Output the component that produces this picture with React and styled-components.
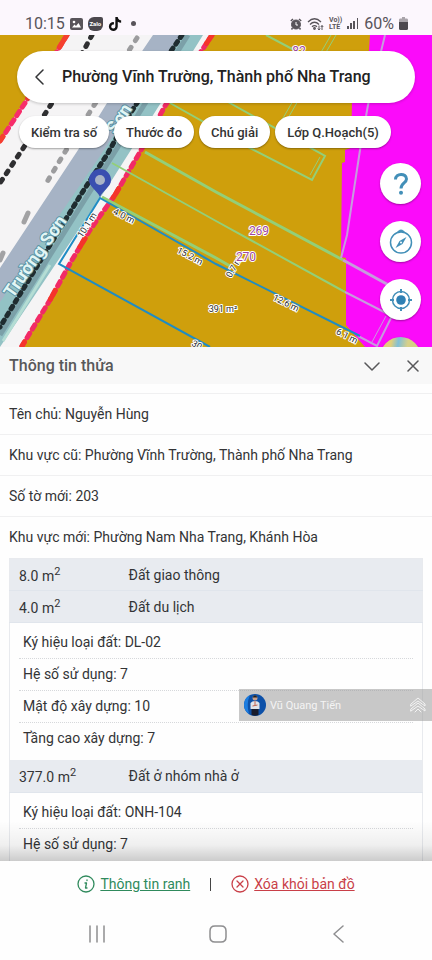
import React, { useState } from 'react';
import styled, { createGlobalStyle } from 'styled-components';
import { FaTiktok } from 'react-icons/fa';

const GlobalStyle = createGlobalStyle`
  * {
    box-sizing: border-box;
  }

  body {
    margin: 0;
    background: #fefefe;
    color: #333436;
    font-family: Roboto, 'Noto Sans', sans-serif;
  }

  button {
    border: none;
    padding: 0;
    font-family: inherit;
    color: inherit;
    cursor: pointer;
  }
`;

const Screen = styled.div`
  display: flex;
  flex-direction: column;
  height: 100vh;
  overflow: hidden;
`;

const StatusBar = styled.header`
  display: flex;
  justify-content: space-between;
  align-items: center;
  flex: none;
  height: 35px;
  padding: 12px 24px 0 25px;
  background: #fcf7fd;
  color: #58545a;
`;

const StatusGroup = styled.div`
  display: flex;
  align-items: center;
  gap: 5px;
`;

const StatusText = styled.span`
  font-size: 16px;
  line-height: 20px;
`;

const ZaloBadge = styled.span`
  width: 15px;
  height: 14px;
  border-radius: 6px 2px 6px 6px;
  background: #4c484e;
  color: #fff;
  font-size: 6px;
  font-weight: 700;
  line-height: 14px;
  text-align: center;
`;

const Dot = styled.span`
  width: 5px;
  height: 5px;
  margin-left: 4px;
  border-radius: 50%;
  background: #58545a;
`;

const VoLte = styled.span`
  font-size: 7px;
  font-weight: 700;
  line-height: 7px;
`;

const MapArea = styled.section`
  position: relative;
  flex: none;
  height: 312px;
  padding: 16px 17px 0;
  overflow: hidden;
  background: #cf9f0c;
`;

const MapCanvas = styled.svg`
  position: absolute;
  top: 0;
  left: 0;
  width: 100%;
  height: 100%;

  text {
    font-family: Roboto, sans-serif;
    text-anchor: middle;
    paint-order: stroke;
    stroke-linejoin: round;
  }
`;

const SearchPill = styled.div`
  position: relative;
  display: flex;
  align-items: center;
  height: 52px;
  padding-left: 8px;
  border-radius: 26px;
  background: #fff;
  box-shadow: 0 1px 3px rgba(0, 0, 0, 0.2);
`;

const BackBtn = styled.button`
  display: flex;
  align-items: center;
  justify-content: center;
  width: 30px;
  height: 40px;
  margin-right: 7px;
  background: none;
`;

const PlaceName = styled.h1`
  margin: 0;
  color: #222;
  font-size: 16px;
  font-weight: 500;
  line-height: 24px;
  white-space: nowrap;
`;

const ChipRow = styled.nav`
  position: relative;
  display: flex;
  gap: 5px;
  margin-top: 13px;
  padding-left: 2px;
`;

const Chip = styled.button`
  height: 32px;
  padding: 0 12px;
  border-radius: 16px;
  background: #fff;
  box-shadow: 0 1px 2px rgba(0, 0, 0, 0.35);
  color: #333;
  font-size: 13px;
  font-weight: 500;
  white-space: nowrap;
`;

const MapTools = styled.div`
  position: absolute;
  top: 128px;
  right: 11px;
  display: flex;
  flex-direction: column;
  gap: 17px;
`;

const ToolBtn = styled.button`
  display: flex;
  align-items: center;
  justify-content: center;
  width: 41px;
  height: 41px;
  overflow: hidden;
  border-radius: 50%;
  background: #fff;
  box-shadow: 0 1px 2px rgba(0, 0, 0, 0.35);
  color: #428fb8;
`;

const LayerBtn = styled(ToolBtn)`
  background: linear-gradient(100deg, #e2cf7a 25%, #7fbfd8 40%, #d8d088 60%, #c9cf78 100%);
`;

const Sheet = styled.main`
  position: relative;
  flex: 1;
  min-height: 0;
  overflow: hidden;

  &::after {
    content: '';
    position: absolute;
    right: 0;
    bottom: 0;
    left: 0;
    height: 40px;
    background: linear-gradient(rgba(0, 0, 0, 0), rgba(0, 0, 0, 0.06) 60%, rgba(0, 0, 0, 0.2));
    pointer-events: none;
  }
`;

const SheetHeader = styled.div`
  display: flex;
  align-items: center;
  height: 37px;
  padding: 0 9px;
  background: #f8f8f8;
  color: #58585a;
`;

const SheetTitle = styled.h2`
  flex: 1;
  margin: 0;
  font-size: 16px;
  font-weight: 500;
  line-height: 24px;
`;

const IconBtn = styled.button`
  display: flex;
  align-items: center;
  justify-content: center;
  width: 20px;
  height: 30px;
  margin-left: 21px;
  background: none;
`;

const InfoList = styled.div`
  padding: 9px 0 1px;
`;

const InfoRow = styled.p`
  margin: 0;
  padding: 0 9px;
  border-top: 1px solid #f0f0f1;
  font-size: 14px;
  line-height: 40px;
`;

const LandTable = styled.table`
  width: calc(100% - 18px);
  margin: 0 9px;
  border: 1px solid #e8eaee;
  border-collapse: collapse;
  font-size: 14px;

  td {
    padding: 0;
  }
`;

const LandRow = styled.tr`
  height: 32px;
  border-bottom: 1px solid #e0e5ec;
  background: #e8ebf0;

  th {
    width: 119px;
    padding: 0 0 0 9px;
    font-weight: 400;
    text-align: left;
  }

  sup {
    font-size: 11px;
    line-height: 1;
  }
`;

const DetailList = styled.ul`
  margin: 0;
  padding: 4px 9px 6px;
  list-style: none;
`;

const DetailItem = styled.li`
  padding: 0 4px;
  border-bottom: 1px dotted #d6d8db;
  line-height: 31px;

  &:last-child {
    border-bottom: none;
  }
`;

const AgentTag = styled.aside`
  position: absolute;
  top: 342px;
  right: 0;
  display: flex;
  align-items: center;
  gap: 4px;
  width: 193px;
  height: 32px;
  padding: 0 6px 0 5px;
  background: rgba(155, 155, 155, 0.55);
  color: #f4f4f4;
  font-size: 11px;

  span {
    flex: 1;
  }
`;

const Actions = styled.footer`
  display: flex;
  justify-content: center;
  align-items: center;
  flex: none;
  height: 46px;
  background: #fefefe;
  font-size: 14px;
`;

const ActionLink = styled.a`
  display: flex;
  align-items: center;
  gap: 5px;
  color: ${({ $color }) => $color};
`;

const Divider = styled.span`
  width: 1px;
  height: 13px;
  margin: 0 20px;
  background: #444;
`;

const NavBar = styled.nav`
  display: flex;
  justify-content: space-around;
  align-items: center;
  flex: none;
  height: 53px;
  padding: 0 33px 0 36px;
  color: #8e8e90;
`;

const NavBtn = styled.button`
  display: flex;
  align-items: center;
  justify-content: center;
  width: 40px;
  height: 40px;
  background: none;
`;

const parcelLabels = [
  { text: '10.1 m', x: 87, y: 225, rotate: -57 },
  { text: '4.0 m', x: 124, y: 216, rotate: 27 },
  { text: '15.2 m', x: 190, y: 256, rotate: 28 },
  { text: '0.7 m', x: 234, y: 267, rotate: -60 },
  { text: '12.6 m', x: 286, y: 303, rotate: 27 },
  { text: '6.1 m', x: 347, y: 336, rotate: 27 },
  { text: '391 m²', x: 223, y: 309, rotate: 0 },
  { text: '30', x: 197, y: 345, rotate: 28 },
];

const parcelNumbers = [
  { text: '269', x: 259, y: 235 },
  { text: '270', x: 246, y: 261 },
  { text: '82', x: 299, y: 55 },
];

const infoRows = [
  'Tên chủ: Nguyễn Hùng',
  'Khu vực cũ: Phường Vĩnh Trường, Thành phố Nha Trang',
  'Số tờ mới: 203',
  'Khu vực mới: Phường Nam Nha Trang, Khánh Hòa',
];

const landUses = [
  { area: '8.0', name: 'Đất giao thông' },
  {
    area: '4.0',
    name: 'Đất du lịch',
    details: ['Ký hiệu loại đất: DL-02', 'Hệ số sử dụng: 7', 'Mật độ xây dựng: 10', 'Tầng cao xây dựng: 7'],
  },
  {
    area: '377.0',
    name: 'Đất ở nhóm nhà ở',
    details: ['Ký hiệu loại đất: ONH-104', 'Hệ số sử dụng: 7'],
  },
];

const PlanningMap = () => (
  <MapCanvas viewBox="0 35 432 312" preserveAspectRatio="xMidYMid slice" aria-hidden="true">
    <rect x="0" y="35" width="432" height="312" fill="#cf9f0c" />
    <polygon points="66,35 212,35 165,106 140,150 20,347 0,347 0,140" fill="#f5f4f5" />

    {/* road */}
    <polygon points="153,35 196,35 152,103 112,168 0,345 0,268 78,150 107,103" fill="#a6b3c5" />
    <polygon points="180,35 203,35 162,101 110,183 0,347 0,302 100,156" fill="#93c2c5" />
    <path d="M188 35 L0 335" stroke="#7ba0a8" strokeWidth="5" />
    <path d="M182 35 L165 60 L128 117 L108 153 L80 196 L0 327" stroke="#1f2c30" strokeWidth="5" strokeDasharray="3 5" strokeLinecap="round" fill="none" />
    <path d="M50 265 L3 341" stroke="#b4ddd4" strokeWidth="3" />

    {/* dotted planning lines */}
    <g fill="none" strokeLinecap="round">
      <path d="M92 35 L84 50 L52 103 L22 150 L0 183" stroke="#2f2f31" strokeWidth="5" strokeDasharray="3 7" />
      <path d="M137 38 L93 107 L65 152 L47 182" stroke="#9c9c9e" strokeWidth="5" strokeDasharray="3 8" />
      <path d="M28 213 L24 222 M3 253 L0 260" stroke="#a2a2a4" strokeWidth="5" />
      <path d="M67 35 L25 103 L0 141" stroke="#f72d6a" strokeWidth="5" strokeDasharray="5 5" />
      <path d="M67 35 L25 103 L0 141" stroke="#f5402e" strokeWidth="5" strokeDasharray="14 46" />
      <path d="M212 35 L165 106 L140 152 L115 195 L90 230 L72 260 L50 300 L22 346" stroke="#f22a66" strokeWidth="5" strokeDasharray="5 5" />
      <path d="M212 35 L165 106 L140 152 L115 195 L90 230 L72 260 L50 300 L22 346" stroke="#f5342b" strokeWidth="5" strokeDasharray="10 50" />
    </g>

    <polygon
      points="370,35 369,50 352,103 351,148 345,150 345,162 342,163 341,257 346,258 346,325 352,332 365,347 432,347 432,35"
      fill="#fb0bfa"
    />

    {/* parcel borders */}
    <g fill="none" stroke="#93cf78" strokeWidth="2">
      <path d="M266 35 L296 51" />
      <path d="M331 35 L275 132 M336 35 L280 132" strokeWidth="1" />
      <path d="M170 103 L250 148 L312 180 L325 156 L228 102" />
      <path d="M310 175 L320 157" strokeWidth="1" />
      <path d="M145 152 L216 192 L343 260" strokeWidth="3" />
      <path d="M112 163 L216 221 L345 292" />
      <path d="M102 197 L216 258 L230 266" strokeWidth="3" />
    </g>
    <g fill="none" stroke="#c69bdd" strokeWidth="3">
      <path d="M385 35 L368 105 L360 150 L347 235 L341 258" strokeWidth="2" />
      <path d="M343 260 L394 288" />
      <path d="M345 292 L392 316 L377 346 L358 336" strokeWidth="2" />
      <path d="M386 316 L372 342" strokeWidth="1" />
    </g>

    <path d="M210 347 L59 264 L100 198 L216 264 L360 336" fill="none" stroke="#1f8cc4" strokeWidth="2" />

    <g fill="#e2f6f5" stroke="#5a93a5" strokeWidth="2" fontSize="18" fontWeight="700">
      <text transform="translate(40 260) rotate(-55)">Trường Sơn</text>
      <text transform="translate(124 122) rotate(-57)">Sơn</text>
    </g>

    <g fill="#2b2b2b" stroke="#fff" strokeWidth="2" fontSize="9">
      {parcelLabels.map(label => (
        <text key={label.text} dy="3" transform={`translate(${label.x} ${label.y}) rotate(${label.rotate})`}>
          {label.text}
        </text>
      ))}
    </g>
    <g fill="#a0489f" stroke="#fff" strokeWidth="2" fontSize="12">
      {parcelNumbers.map(number => (
        <text key={number.text} x={number.x} y={number.y}>
          {number.text}
        </text>
      ))}
    </g>

    {/* location pin */}
    <path d="M100 197 C97 190 89 187 89 180 A11 11 0 0 1 111 180 C111 187 103 190 100 197 Z" fill="#3a4fb0" />
    <circle cx="100" cy="180" r="5" fill="#a9b4c6" />
  </MapCanvas>
);

const ImageIcon = () => (
  <svg width="13" height="12" viewBox="0 0 13 12">
    <rect width="13" height="12" rx="2" fill="#58545a" />
    <circle cx="4" cy="4" r="1.3" fill="#fff" />
    <path d="M2 9.5 L4.500 6.5 L6 8 L8.500 5 L11 9.5 Z" fill="#fff" />
  </svg>
);

const AlarmIcon = () => (
  <svg width="12" height="12" viewBox="0 0 12 12" fill="none" stroke="#58545a">
    <circle cx="6" cy="6.5" r="4.5" fill="#58545a" />
    <path d="M0.800 3 L3 1 M11.200 3 L9 1 M2.500 10 L1.500 11.500 M9.500 10 L10.500 11.500" strokeWidth="1.5" />
    <path d="M6 4 V7 H8" stroke="#fff" />
  </svg>
);

const WifiIcon = () => (
  <svg width="17" height="14" viewBox="0 0 17 14" fill="none" stroke="#58545a" strokeWidth="1.3">
    <path d="M1 5 Q7.500 -1.500 14 5 M3 7.500 Q7.500 3 12 7.500 M5 9.800 Q7.500 7.500 10 9.800" />
    <circle cx="7.5" cy="11.5" r="0.8" />
    <path d="M12 8.500 V13 M10.800 11.500 L12 13 L13.200 11.500 M15 13 V8.500 M13.800 10 L15 8.500 L16.200 10" strokeWidth="1" />
  </svg>
);

const SignalIcon = () => (
  <svg width="12" height="11" viewBox="0 0 12 11" fill="#58545a">
    <rect x="0" y="8" width="2" height="3" />
    <rect x="3" y="5" width="2" height="6" />
    <rect x="6" y="3" width="2" height="8" />
    <rect x="10" y="0" width="1" height="11" />
  </svg>
);

const BatteryIcon = () => (
  <svg width="9" height="13" viewBox="0 0 9 13">
    <path d="M3 0 H6 V1.500 H8 Q9 1.500 9 3 V5 H0 V3 Q0 1.500 1 1.500 H3 Z" fill="#a9a4aa" />
    <path d="M0 5 H9 V11.500 Q9 13 7.500 13 H1.500 Q0 13 0 11.500 Z" fill="#4c484e" />
  </svg>
);

const Stroke = ({ size, d, width = 1.5 }) => (
  <svg
    width={size}
    height={size}
    viewBox={`0 0 ${size} ${size}`}
    fill="none"
    stroke="currentColor"
    strokeWidth={width}
    strokeLinecap="round"
    strokeLinejoin="round"
  >
    <path d={d} />
  </svg>
);

const HelpIcon = () => (
  <svg width="20" height="24" viewBox="0 0 20 24" fill="none" stroke="currentColor" strokeWidth="3">
    <path d="M4.500 7.500 C4.500 0.800 15.500 0.800 15.500 7 C15.500 11 10 11 10 16.500" />
    <circle cx="10" cy="20.8" r="2" fill="currentColor" stroke="none" />
  </svg>
);

const CompassIcon = () => (
  <svg width="24" height="26" viewBox="0 0 24 26" fill="none" stroke="currentColor">
    <circle cx="12" cy="13.5" r="10.5" strokeWidth="1.5" />
    <path d="M8.500 3 Q12 -1 15.500 3 Q12 1.800 8.500 3 Z" fill="currentColor" />
    <path d="M17.500 8 L13.500 15 L6.500 19 L10.500 12 Z" fill="currentColor" stroke="none" />
    <circle cx="12" cy="13.5" r="1" fill="#fff" stroke="none" />
  </svg>
);

const LocateIcon = () => (
  <svg width="24" height="24" viewBox="0 0 24 24" fill="none" stroke="currentColor">
    <circle cx="12" cy="12" r="8.5" strokeWidth="1.5" />
    <circle cx="12" cy="12" r="4.8" fill="#2f80b4" stroke="none" />
    <path d="M12 1 V5 M12 19 V23 M1 12 H5 M19 12 H23" strokeWidth="2" />
  </svg>
);

const Avatar = () => (
  <svg width="22" height="22" viewBox="0 0 22 22">
    <circle cx="11" cy="11" r="11" fill="#0c50a8" />
    <path d="M0 11 A11 11 0 0 1 6 1 Q2 9 5 20 A11 11 0 0 1 0 11 Z" fill="#1d7de0" />
    <circle cx="11" cy="4" r="2.5" fill="#c8a08c" />
    <path d="M8.500 3.500 Q11 -1 13.500 3.500 Z" fill="#222" />
    <path d="M6.500 9 Q8 7 11 7 Q14 7 15.500 9 V15 H6.500 Z" fill="#dfe3ea" />
    <path d="M7.500 15 H14.500 V21 Q11 22.500 7.500 21 Z" fill="#181c2c" />
    <path d="M11 7 V11 M8.500 12 L13.500 11" stroke="#c06450" />
  </svg>
);

const App = () => {
  const [open, setOpen] = useState(true);

  return (
    <>
      <GlobalStyle />
      <Screen>
        <StatusBar>
          <StatusGroup>
            <StatusText>10:15</StatusText>
            <ImageIcon />
            <ZaloBadge>Zalo</ZaloBadge>
            <FaTiktok size={14} color="#111" />
            <Dot />
          </StatusGroup>
          <StatusGroup>
            <AlarmIcon />
            <WifiIcon />
            <VoLte>
              Vo))
              <br />
              LTE
            </VoLte>
            <SignalIcon />
            <StatusText>60%</StatusText>
            <BatteryIcon />
          </StatusGroup>
        </StatusBar>

        <MapArea>
          <PlanningMap />
          <SearchPill>
            <BackBtn aria-label="Quay lại">
              <Stroke size={16} d="M11 1 L4 8 L11 15" />
            </BackBtn>
            <PlaceName>Phường Vĩnh Trường, Thành phố Nha Trang</PlaceName>
          </SearchPill>
          <ChipRow>
            <Chip>Kiểm tra số</Chip>
            <Chip>Thước đo</Chip>
            <Chip>Chú giải</Chip>
            <Chip>Lớp Q.Hoạch(5)</Chip>
          </ChipRow>
          <MapTools>
            <ToolBtn aria-label="Trợ giúp">
              <HelpIcon />
            </ToolBtn>
            <ToolBtn aria-label="La bàn">
              <CompassIcon />
            </ToolBtn>
            <ToolBtn aria-label="Vị trí">
              <LocateIcon />
            </ToolBtn>
            <LayerBtn aria-label="Lớp bản đồ" />
          </MapTools>
        </MapArea>

        <Sheet>
          <SheetHeader>
            <SheetTitle>Thông tin thửa</SheetTitle>
            <IconBtn aria-label="Thu gọn" onClick={() => setOpen(!open)}>
              <Stroke size={16} d="M1 5 L8 12 L15 5" />
            </IconBtn>
            <IconBtn aria-label="Đóng" onClick={() => setOpen(false)}>
              <Stroke size={12} d="M1 1 L11 11 M11 1 L1 11" />
            </IconBtn>
          </SheetHeader>
          {open && (
            <>
              <InfoList>
                {infoRows.map(row => (
                  <InfoRow key={row}>{row}</InfoRow>
                ))}
              </InfoList>
              <LandTable>
                <tbody>
                  {landUses.map(use => (
                    <React.Fragment key={use.name}>
                      <LandRow>
                        <th scope="row">
                          {use.area} m<sup>2</sup>
                        </th>
                        <td>{use.name}</td>
                      </LandRow>
                      {use.details && (
                        <tr>
                          <td colSpan={2}>
                            <DetailList>
                              {use.details.map(detail => (
                                <DetailItem key={detail}>{detail}</DetailItem>
                              ))}
                            </DetailList>
                          </td>
                        </tr>
                      )}
                    </React.Fragment>
                  ))}
                </tbody>
              </LandTable>
            </>
          )}
          <AgentTag>
            <Avatar />
            <span>Vũ Quang Tiến</span>
            <Stroke size={16} width={1} d="M1 7 L8 1 L15 7 V9 L8 4 L1 9 Z M1 12 L8 6 L15 12 V14 L8 9 L1 14 Z M5 15 L8 12 L11 15" />
          </AgentTag>
        </Sheet>

        <Actions>
          <ActionLink href="#ranh" $color="#2f8a5c">
            <Stroke size={18} width={1.3} d="M9 1 A8 8 0 1 0 9 17 A8 8 0 1 0 9 1 M10 5 V5.500 M8 8 H9.500 L8.500 13 H10" />
            Thông tin ranh
          </ActionLink>
          <Divider />
          <ActionLink href="#xoa" $color="#c93f48">
            <Stroke size={18} width={1.3} d="M9 1 A8 8 0 1 0 9 17 A8 8 0 1 0 9 1 M6 6 L12 12 M12 6 L6 12" />
            Xóa khỏi bản đồ
          </ActionLink>
        </Actions>

        <NavBar>
          <NavBtn aria-label="Ứng dụng gần đây">
            <Stroke size={18} d="M2 1 V17 M9 1 V17 M16 1 V17" />
          </NavBtn>
          <NavBtn aria-label="Trang chủ">
            <Stroke size={18} d="M6 1 H12 Q17 1 17 6 V12 Q17 17 12 17 H6 Q1 17 1 12 V6 Q1 1 6 1 Z" />
          </NavBtn>
          <NavBtn aria-label="Trở về">
            <Stroke size={18} d="M13 1 L4 9 L13 17" />
          </NavBtn>
        </NavBar>
      </Screen>
    </>
  );
};

export default App;
